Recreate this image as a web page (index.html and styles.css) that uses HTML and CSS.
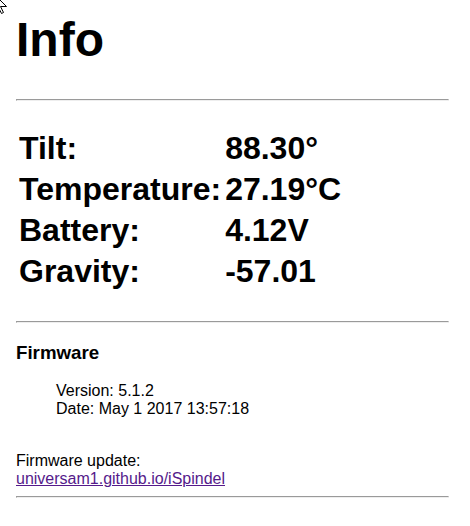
FILE: index.html
```html
<!DOCTYPE html>
<html>
<head>
<meta charset="utf-8">
<title>Info</title>
<link rel="stylesheet" href="styles.css">
</head>
<body>
<div class="wrap">
  <h1 class="title">Info</h1>
  <hr>
  <table class="stats">
    <tr><td>Tilt:</td><td>88.30°</td></tr>
    <tr><td>Temperature:</td><td>27.19°C</td></tr>
    <tr><td>Battery:</td><td>4.12V</td></tr>
    <tr><td>Gravity:</td><td>-57.01</td></tr>
  </table>
  <hr>
  <h3 class="sub">Firmware</h3>
  <blockquote class="fw">Version: 5.1.2<br>Date: May 1 2017 13:57:18</blockquote>
  <br>Firmware update:<br><a class="link" href="#">universam1.github.io/iSpindel</a>
  <hr>
</div>
<svg class="cursor" width="14" height="16" viewBox="0 0 14 16"><path d="M-5.5,-5.5 L-5.5,11.5 L-1.5,7.5 L1.5,13.5 L3.5,12.5 L0.5,6.5 L6.5,6.5 Z" fill="#fff" stroke="#000" stroke-width="1"/></svg>
</body>
</html>
```
FILE: styles.css
```css
body {
  margin: 8px;
  font-family: "Liberation Sans", Arial, sans-serif;
  font-size: 16px;
  color: #000;
  background: #fff;
}
.wrap {
  margin-left: 8px;
  width: 433px;
}
.title {
  font-size: 48px;
  margin: 4px 0 32px;
}
hr {
  margin: 8px 0;
}
.stats {
  font-size: 32px;
  font-weight: bold;
  margin: 26px 0 28px;
}
.sub {
  font-size: 18.72px;
  margin: 18.72px 0;
}
.fw {
  margin: 16px 40px;
}
.link {
  color: #551a8b;
}
.cursor {
  position: absolute;
  left: 0;
  top: 0;
}
```
